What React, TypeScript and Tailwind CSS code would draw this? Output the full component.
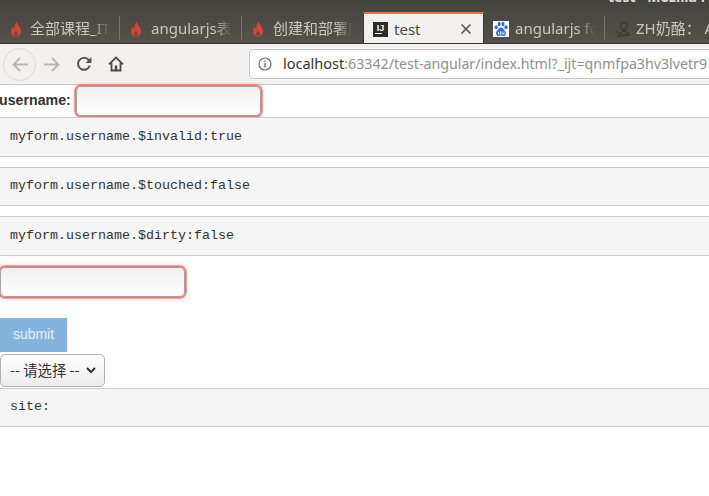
import React from "react";

const sans = "font-['Noto_Sans','Noto_Sans_CJK_SC',sans-serif]";

function Flame() {
  return (
    <svg width="12" height="16" viewBox="0 0 12 16" className="shrink-0">
      <path d="M6.5 0.5C7 3.5 11 6 11 10.5C11 13.5 8.8 15.5 6 15.5C3.2 15.5 1 13.5 1 10.5C1 8.5 2 6.8 3 5.5C3.2 7 3.8 7.8 4.5 8C4.2 5.5 5 2.5 6.5 0.5Z" fill="#d9453d" />
      <path d="M6 9C6.2 10.5 8 11.3 8 13C8 14.3 7 15 6 15C5 15 4 14.3 4 13C4 11.5 5.6 10.8 6 9Z" fill="#6b4a42" />
    </svg>
  );
}

function Tab({ icon, label, w, gap, sep = true }: { icon: React.ReactNode; label: string; w: string; gap: string; sep?: boolean }) {
  return (
    <div className={`${w} h-[29px] flex items-center pl-[10px] pr-[10px] ${gap} relative shrink-0`}>
      {icon}
      <span className="flex-1 overflow-hidden text-[15px] text-[#c9c7c1] whitespace-nowrap [mask-image:linear-gradient(to_right,black_78%,transparent)]">
        {label}
      </span>
      {sep && <span className="absolute right-0 top-[2px] h-[24px] w-px bg-[#77746c]" />}
    </div>
  );
}

function Code({ children }: { children: string }) {
  return (
    <pre className="h-[39.5px] bg-[#f5f5f5] border-y border-[#cccccc] pl-[10px] flex items-center font-['Liberation_Mono',monospace] text-[13.33px] text-[#333333] shrink-0">
      {children}
    </pre>
  );
}

const inputCls =
  "h-[29.5px] w-[185px] rounded-[5px] border border-[#a3a3a3] bg-gradient-to-b from-[#f0f0f0] to-white shadow-[0_0_0_1.5px_#f76e6e,0_0_3px_2px_rgba(247,110,110,0.4)] outline-none shrink-0";

export default function App() {
  return (
    <div className={`w-[709px] h-[496px] overflow-hidden bg-white flex flex-col ${sans}`}>
      <div className="h-[44px] bg-gradient-to-b from-[#45433e] to-[#55524b] border-b border-[#3a3833] flex items-end shrink-0 relative overflow-hidden">
        <span className="absolute left-[608px] -top-[14px] text-[14px] font-bold text-[#dfdbd2] whitespace-nowrap">test - Mozilla Firefox</span>
        <Tab w="w-[120px]" gap="gap-[8px]" icon={<Flame />} label="全部课程_IT学习" />
        <Tab w="w-[122px]" gap="gap-[9px]" icon={<Flame />} label="angularjs表单验证" />
        <Tab w="w-[121px]" gap="gap-[9px]" icon={<Flame />} label="创建和部署应用" sep={false} />
        <div className="w-[121px] h-[32px] -mb-px bg-[#f2f1ef] border-t-2 border-[#e8734a] border-x border-x-[#3a3833] flex items-center pl-[9px] shrink-0">
          <div className="w-[15px] h-[15px] bg-[#2b2b2b] text-white text-[9px] font-bold leading-none flex flex-col items-center justify-center font-['Liberation_Sans',sans-serif]">
            <span>IJ</span>
            <span className="w-[7px] h-px bg-white self-start ml-[2px]" />
          </div>
          <span className="text-[15px] text-[#4a4a46] ml-[6px]">test</span>
          <svg width="12" height="12" viewBox="0 0 12 12" className="ml-auto mr-[11px]">
            <path d="M1.5 1.5L10.5 10.5M10.5 1.5L1.5 10.5" stroke="#55534f" strokeWidth="1.6" />
          </svg>
        </div>
        <Tab
          w="w-[121px]"
          gap="gap-[6px]"
          icon={
            <svg width="16" height="16" viewBox="0 0 16 16" className="shrink-0 -ml-px">
              <rect width="16" height="16" fill="#fff" />
              <g fill="#2a68e8">
                <ellipse cx="3.2" cy="6.2" rx="1.6" ry="2" />
                <ellipse cx="6.2" cy="3" rx="1.5" ry="2.2" />
                <ellipse cx="10" cy="3" rx="1.5" ry="2.2" />
                <ellipse cx="13" cy="6.2" rx="1.6" ry="2" />
                <path d="M8 6.5C10 6.5 10.3 8.5 12 9.7C13.8 11.2 12.8 15 10.5 15C9.5 15 9 14.6 8 14.6C7 14.6 6.5 15 5.5 15C3.2 15 2.2 11.2 4 9.7C5.7 8.5 6 6.5 8 6.5Z" />
              </g>
              <path d="M5.5 11V13H7.5V10M9 10.5V13H11V10.5" fill="none" stroke="#fff" strokeWidth="0.8" />
            </svg>
          }
          label="angularjs form"
        />
        <Tab
          w="w-[140px]"
          gap="gap-[5px]"
          icon={
            <svg width="16" height="16" viewBox="0 0 16 16" className="shrink-0">
              <circle cx="9" cy="5" r="3.5" fill="none" stroke="#3a3833" strokeWidth="1.4" />
              <path d="M1 10C3 13 5 14 7 11C9 9 12 10 14 14L2 15" fill="none" stroke="#3a3833" strokeWidth="1.4" />
            </svg>
          }
          label="ZH奶酪： Angular"
          sep={false}
        />
      </div>

      <div className="h-[41px] bg-[#f2f1ef] border-b border-[#c8c8c6] flex items-center shrink-0">
        <div className="ml-[3px] w-[33px] h-[33px] rounded-full border border-[#d9d9d7] flex items-center justify-center shrink-0">
          <svg width="16" height="15" viewBox="0 0 16 15">
            <path d="M16 7.5H2M8 1L1.5 7.5L8 14" fill="none" stroke="#b5b5b3" strokeWidth="1.8" />
          </svg>
        </div>
        <svg width="16" height="15" viewBox="0 0 16 15" className="ml-[8px] shrink-0">
          <path d="M0 7.5H14M8 1L14.5 7.5L8 14" fill="none" stroke="#b5b5b3" strokeWidth="1.8" />
        </svg>
        <svg width="16" height="16" viewBox="0 0 16 16" className="ml-[16px] shrink-0">
          <path d="M13.8 9.5A6 6 0 1 1 12 3.3L14 5.5" fill="none" stroke="#555552" strokeWidth="2" />
          <path d="M15.5 1V7H9.5Z" fill="#555552" />
        </svg>
        <svg width="16" height="16" viewBox="0 0 16 16" className="ml-[16px] shrink-0">
          <path d="M1 8.3L8 1.5L15 8.3M3.5 7V14.5H12.5V7" fill="none" stroke="#4a4a47" strokeWidth="1.8" />
          <rect x="6.8" y="9.5" width="2.4" height="5" fill="#4a4a47" />
        </svg>
        <div className="ml-[125px] w-[480px] h-[30px] bg-white border border-[#c9c9c7] rounded-l-[4px] flex items-center pl-[8px] whitespace-nowrap overflow-hidden shrink-0">
          <svg width="14" height="14" viewBox="0 0 14 14" className="shrink-0">
            <circle cx="7" cy="7" r="6" fill="none" stroke="#6a6a68" strokeWidth="1.2" />
            <rect x="6.3" y="6" width="1.4" height="4.5" fill="#6a6a68" />
            <rect x="6.3" y="3.4" width="1.4" height="1.5" fill="#6a6a68" />
          </svg>
          <span className="ml-[11px] text-[14.5px] text-[#333]">localhost</span>
          <span className="text-[14.2px] text-[#8f8f8d]">:63342/test-angular/index.html?_ijt=qnmfpa3hv3lvetr9</span>
        </div>
      </div>

      <div className="flex-1 flex flex-col font-['Liberation_Sans',sans-serif] text-[14px] text-[#333333]">
        <div className="h-[32px] flex items-center shrink-0">
          <label className="font-bold -ml-px text-[14.2px]">username:</label>
          <input className={`${inputCls} ml-[5px]`} />
        </div>
        <Code>myform.username.$invalid:true</Code>
        <div className="h-[10px] shrink-0" />
        <Code>myform.username.$touched:false</Code>
        <div className="h-[10px] shrink-0" />
        <Code>myform.username.$dirty:false</Code>
        <div className="pt-[11.5px] shrink-0">
          <input className={`${inputCls} block`} />
        </div>
        <button className="mt-[21px] w-[67px] h-[34px] bg-[#82b4dd] text-[#e8f1f9] text-[14px] shrink-0">submit</button>
        <div className="h-[33px] mt-[2px] w-[105px] rounded-[5px] border border-[#b0b0b0] bg-gradient-to-b from-white to-[#ececec] flex items-center pl-[9px] shrink-0 font-['Noto_Sans_CJK_SC',sans-serif] text-[14.4px] text-[#333]">
          <span>-- 请选择 --</span>
          <svg width="10" height="7" viewBox="0 0 10 7" className="ml-[6px]">
            <path d="M1 1L5 5L9 1" fill="none" stroke="#333" strokeWidth="2" />
          </svg>
        </div>
        <div className="mt-px">
          <Code>site:</Code>
        </div>
      </div>
    </div>
  );
}
